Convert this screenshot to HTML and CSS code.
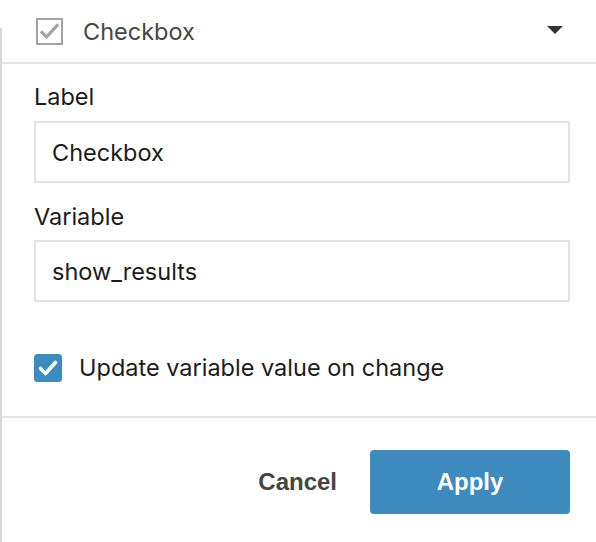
FILE: index.html
```html
<!DOCTYPE html>
<html lang="en">
<head>
<meta charset="utf-8">
<title>Checkbox settings</title>
<link rel="stylesheet" href="styles.css">
</head>
<body>
<div class="page">
  <div class="edge"></div>
  <div class="panel">
    <div class="header">
      <svg class="hicon" width="27" height="27" viewBox="0 0 27 27" aria-hidden="true">
        <rect x="1" y="1" width="25" height="25" fill="#fff" stroke="#a3a3a3" stroke-width="2"/>
        <polyline points="6,14.5 10.5,19 21,7.5" fill="none" stroke="#a3a3a3" stroke-width="3.2" stroke-linecap="square"/>
      </svg>
      <span class="htitle">Checkbox</span>
      <svg class="caret" width="16" height="8" viewBox="0 0 16 8" aria-hidden="true">
        <polygon points="0,0 16,0 8,8" fill="#333"/>
      </svg>
    </div>
    <div class="body">
      <label class="flabel">Label</label>
      <div class="input">Checkbox</div>
      <label class="flabel second">Variable</label>
      <div class="input">show_results</div>
      <div class="checkrow">
        <svg class="cbox" width="28" height="28" viewBox="0 0 28 28" aria-hidden="true">
          <rect x="0" y="0" width="28" height="28" rx="3.5" fill="#3d8bbe"/>
          <polyline points="6.5,14.5 11.5,19.5 21.5,8.5" fill="none" stroke="#fff" stroke-width="3.6" stroke-linecap="round" stroke-linejoin="round"/>
        </svg>
        <span class="checktext">Update variable value on change</span>
      </div>
    </div>
    <div class="footer">
      <button class="cancel">Cancel</button>
      <button class="apply">Apply</button>
    </div>
  </div>
</div>
</body>
</html>
```
FILE: styles.css
```css
html, body {
  margin: 0;
  padding: 0;
  background: #fff;
}
body {
  font-family: Inter, "Noto Sans", sans-serif;
  color: #1b1b1b;
}
.page {
  display: flex;
  width: 596px;
  height: 542px;
  overflow: hidden;
}
.edge {
  width: 2px;
  margin-top: 28px;
  background: #d9d9d9;
  flex: none;
}
.panel {
  flex: 1;
  display: flex;
  flex-direction: column;
}
.header {
  height: 62px;
  display: flex;
  align-items: center;
  padding-left: 34px;
  padding-right: 33px;
  border-bottom: 2px solid #e4e4e4;
}
.hicon {
  flex: none;
}
.htitle {
  margin-left: 20px;
  font-size: 23.5px;
  color: #464646;
  flex: 1;
}
.caret {
  flex: none;
  margin-top: -2px;
}
.body {
  padding: 20px 26px 0 32px;
  display: flex;
  flex-direction: column;
  border-bottom: 2px solid #e4e4e4;
}
.flabel {
  font-size: 23.5px;
  line-height: 26px;
  margin-bottom: 11px;
  color: #1b1b1b;
}
.flabel.second {
  margin-top: 21px;
  margin-bottom: 10px;
}
.input {
  height: 58px;
  border: 2px solid #e3e3e3;
  padding-left: 16px;
  display: flex;
  align-items: center;
  font-size: 23.5px;
  color: #1b1b1b;
}
.checkrow {
  display: flex;
  align-items: center;
  margin-top: 51px;
  margin-bottom: 34px;
}
.cbox {
  flex: none;
}
.checktext {
  margin-left: 17px;
  font-size: 23.5px;
}
.footer {
  display: flex;
  justify-content: flex-end;
  align-items: center;
  padding: 32px 26px 0 0;
}
.cancel {
  background: none;
  border: none;
  font-family: "Liberation Sans", Arial, sans-serif;
  font-weight: bold;
  font-size: 24px;
  color: #444;
  padding: 0;
  margin-right: 33px;
}
.apply {
  width: 200px;
  height: 64px;
  border: none;
  border-radius: 4px;
  background: #3d8bbe;
  color: #fff;
  font-family: "Liberation Sans", Arial, sans-serif;
  font-weight: bold;
  font-size: 24px;
}
```
